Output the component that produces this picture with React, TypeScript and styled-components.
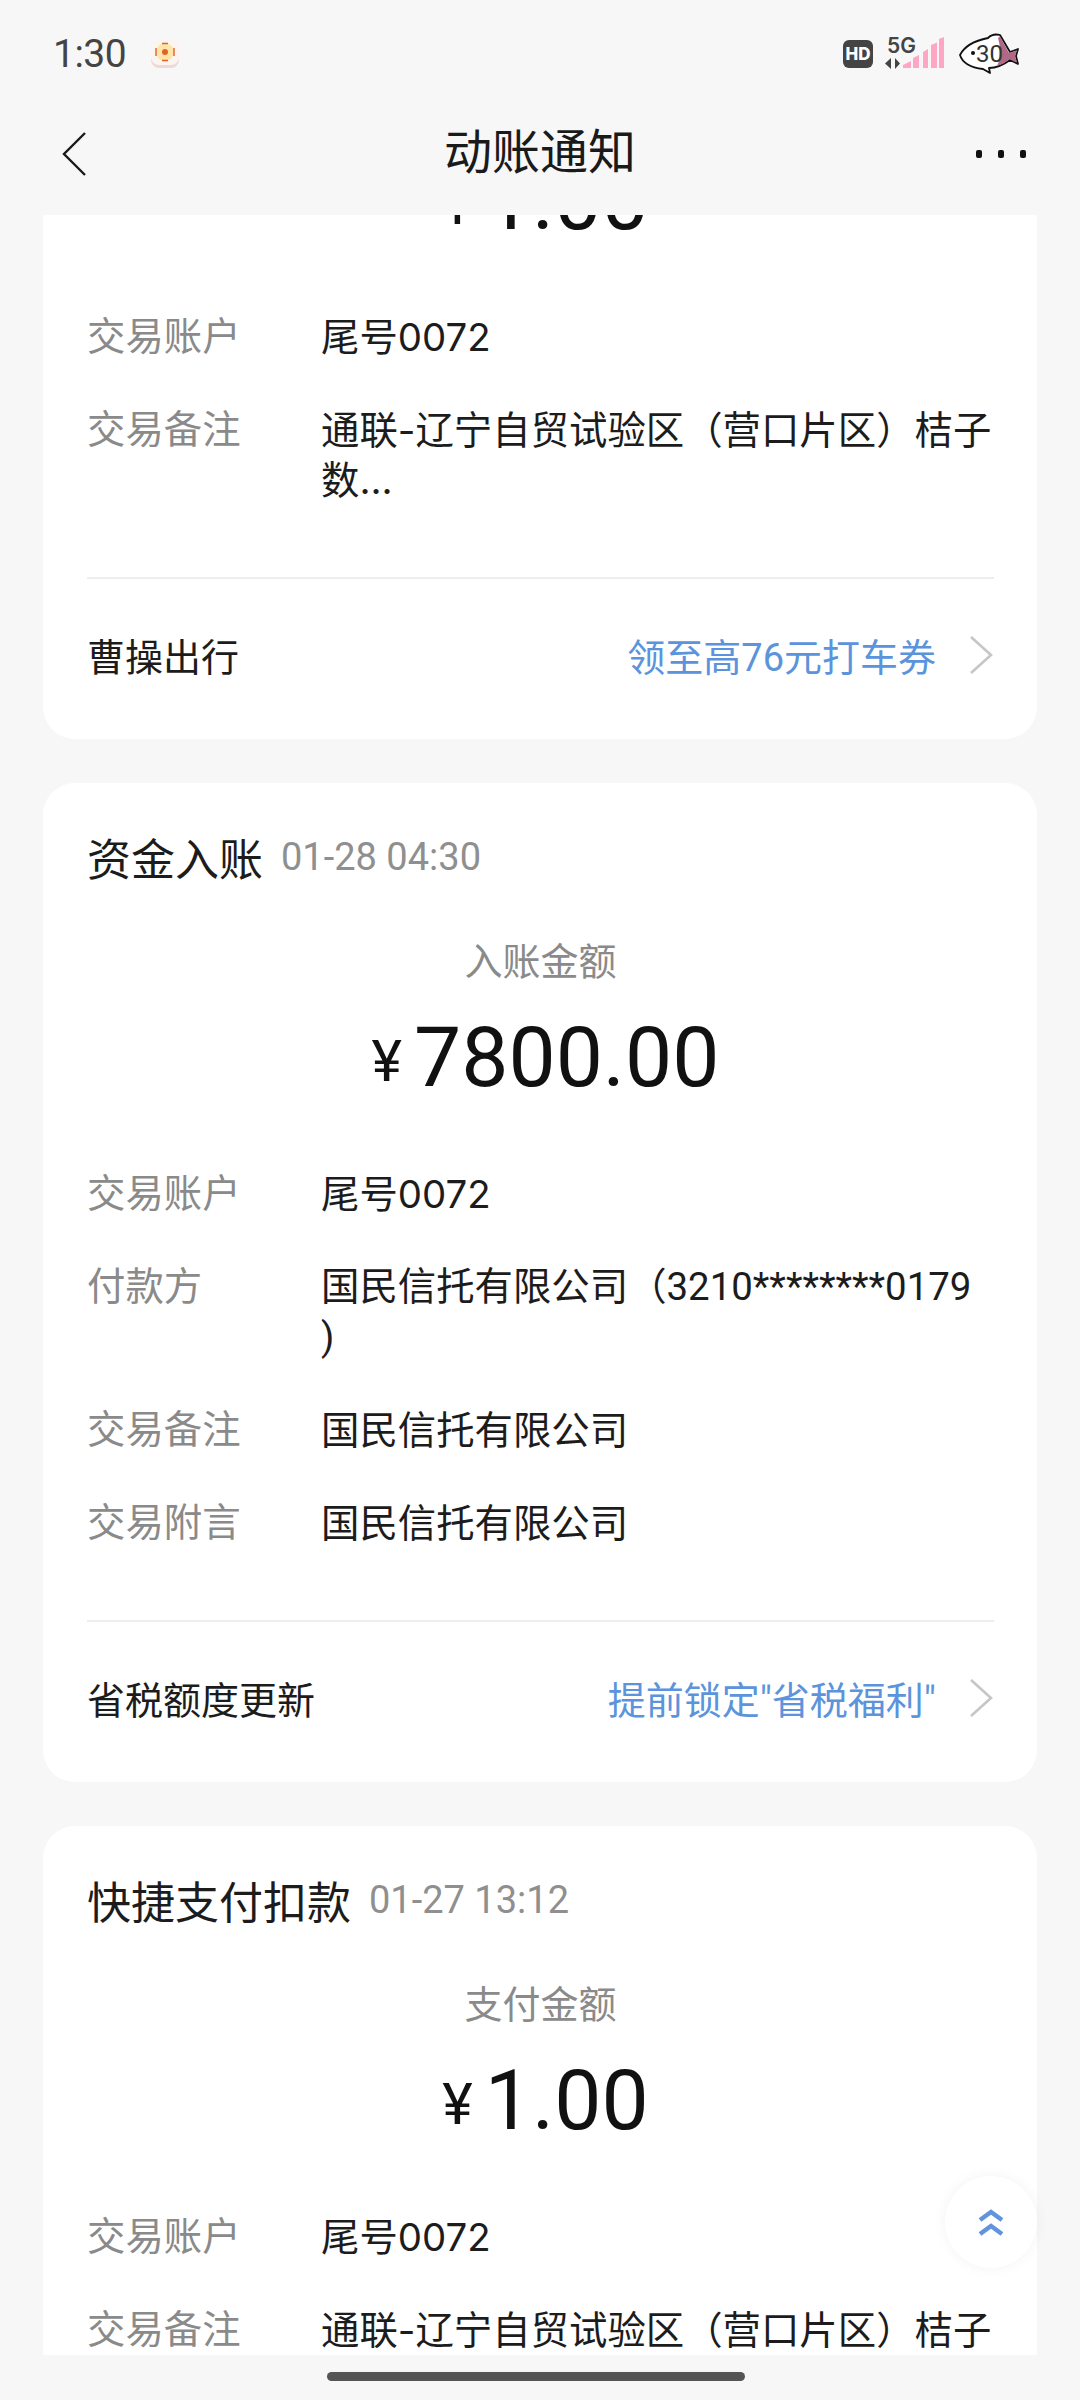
import styled, { createGlobalStyle } from "styled-components";

const GlobalStyle = createGlobalStyle`
  html, body {
    margin: 0;
    padding: 0;
    background: #f7f7f7;
  }
`;

const Page = styled.div`
  position: relative;
  width: 1080px;
  height: 2400px;
  overflow: hidden;
  display: flex;
  flex-direction: column;
  background: #f7f7f7;
  font-family: Roboto, "Noto Sans CJK SC", sans-serif;
`;

const StatusBar = styled.div`
  height: 108px;
  flex: none;
  box-sizing: border-box;
  padding: 0 56px 0 53px;
  display: flex;
  align-items: center;
  color: #444;
`;

const Time = styled.span`
  font-size: 39px;
  line-height: 1;
  font-weight: 400;
  letter-spacing: -0.5px;
`;

const NotifyIcon = styled.svg`
  width: 30px;
  height: 30px;
  margin-left: 24px;
`;

const Spacer = styled.div`
  flex: 1;
`;

const StatusIcons = styled.svg`
  width: 184px;
  height: 48px;
`;

const Header = styled.div`
  height: 107px;
  flex: none;
  box-sizing: border-box;
  position: relative;
  display: flex;
  align-items: center;
  justify-content: space-between;
  padding: 0 54px 16px 62px;
`;

const Title = styled.h1`
  margin: 0;
  position: absolute;
  left: 0;
  right: 0;
  top: 15px;
  text-align: center;
  font-size: 48px;
  line-height: 60px;
  font-weight: 400;
  color: #1a1a1a;
`;

const BackIcon = styled.svg`
  width: 24px;
  height: 46px;
`;

const MoreIcon = styled.svg`
  width: 50px;
  height: 10px;
`;

const Scroll = styled.div`
  flex: 1;
  overflow: hidden;
  padding: 0 43px;
`;

const CardList = styled.div`
  margin-top: -289px;
  display: flex;
  flex-direction: column;
  gap: 44px;
`;

const Card = styled.section`
  background: #fff;
  border-radius: 32px;
  padding: 44px 43px 0 44px;
`;

const CardHead = styled.div`
  height: 60px;
  display: flex;
  align-items: center;
  gap: 18px;
`;

const CardTitle = styled.span`
  font-size: 44px;
  color: #1c1c1c;
`;

const CardDate = styled.span`
  font-size: 38px;
  color: #8f8f8f;
`;

const AmountLabel = styled.div`
  margin-top: 50px;
  text-align: center;
  font-size: 38px;
  line-height: 50px;
  color: #8a8a8a;
`;

const Amount = styled.div`
  margin-top: 21px;
  height: 100px;
  display: flex;
  align-items: center;
  justify-content: center;
  gap: 12px;
  padding-left: 10px;
  color: #111;
`;

const Currency = styled.span`
  font-size: 58px;
  line-height: 1;
  margin-top: 6px;
`;

const AmountValue = styled.span`
  font-size: 84px;
  line-height: 1;
  font-weight: 400;
`;

const Rows = styled.div`
  margin-top: 61px;
  display: flex;
  flex-direction: column;
  gap: 43px;
`;

const Row = styled.div`
  display: flex;
  font-size: 38.4px;
  line-height: 50px;
`;

const RowLabel = styled.span`
  width: 234px;
  flex: none;
  color: #8a8a8a;
`;

// masked account numbers run narrower than the rest of the values
const RowValue = styled.span<{ $masked: boolean }>`
  flex: 1;
  color: #1c1c1c;
  white-space: pre-line;
  font-family: ${(p) => (p.$masked ? "Roboto" : "Inter")}, "Noto Sans CJK SC", sans-serif;
`;

const Footer = styled.div`
  margin-top: 72px;
  height: 162px;
  box-sizing: border-box;
  padding-bottom: 9px;
  border-top: 2px solid #eeeeee;
  display: flex;
  align-items: center;
  justify-content: space-between;
  font-size: 38px;
`;

const FooterName = styled.span`
  color: #1c1c1c;
`;

const FooterLink = styled.span`
  display: flex;
  align-items: center;
  gap: 32px;
  color: #5b93dc;
`;

const ChevronIcon = styled.svg`
  width: 26px;
  height: 40px;
`;

const TopButton = styled.button`
  position: absolute;
  left: 945px;
  top: 2176px;
  width: 92px;
  height: 92px;
  padding: 0;
  border: none;
  border-radius: 50%;
  background: #fff;
  box-shadow: 0 0 14px rgba(0, 0, 0, 0.05);
  display: flex;
  align-items: center;
  justify-content: center;
`;

const BottomBar = styled.div`
  height: 45px;
  flex: none;
  display: flex;
  justify-content: center;
  padding: 17px 8px 0 0;
  box-sizing: border-box;
`;

const HomePill = styled.div`
  width: 418px;
  height: 9px;
  border-radius: 5px;
  background: #555;
`;

type CardData = {
  title: string;
  date: string;
  amountLabel: string;
  amount: string;
  rows: [string, string][];
  footerName: string;
  footerLink: string;
};

const TRANSFER_NOTE = "通联-辽宁自贸试验区（营口片区）桔子\n数...";

const cards: CardData[] = [
  {
    title: "快捷支付扣款",
    date: "01-27 13:12",
    amountLabel: "支付金额",
    amount: "1.00",
    rows: [
      ["交易账户", "尾号0072"],
      ["交易备注", TRANSFER_NOTE],
    ],
    footerName: "曹操出行",
    footerLink: "领至高76元打车券",
  },
  {
    title: "资金入账",
    date: "01-28 04:30",
    amountLabel: "入账金额",
    amount: "7800.00",
    rows: [
      ["交易账户", "尾号0072"],
      ["付款方", "国民信托有限公司（3210********0179\n)"],
      ["交易备注", "国民信托有限公司"],
      ["交易附言", "国民信托有限公司"],
    ],
    footerName: "省税额度更新",
    footerLink: '提前锁定"省税福利"',
  },
  {
    title: "快捷支付扣款",
    date: "01-27 13:12",
    amountLabel: "支付金额",
    amount: "1.00",
    rows: [
      ["交易账户", "尾号0072"],
      ["交易备注", TRANSFER_NOTE],
    ],
    footerName: "曹操出行",
    footerLink: "领至高76元打车券",
  },
];

function NoticeCard({ card }: { card: CardData }) {
  return (
    <Card>
      <CardHead>
        <CardTitle>{card.title}</CardTitle>
        <CardDate>{card.date}</CardDate>
      </CardHead>
      <AmountLabel>{card.amountLabel}</AmountLabel>
      <Amount>
        <Currency>¥</Currency>
        <AmountValue>{card.amount}</AmountValue>
      </Amount>
      <Rows>
        {card.rows.map(([label, value]) => (
          <Row key={label}>
            <RowLabel>{label}</RowLabel>
            <RowValue $masked={value.includes("*")}>{value}</RowValue>
          </Row>
        ))}
      </Rows>
      <Footer>
        <FooterName>{card.footerName}</FooterName>
        <FooterLink>
          {card.footerLink}
          <ChevronIcon viewBox="0 0 26 40" fill="none" stroke="#c6c6c6" strokeWidth="2.6">
            <path d="M3 2 L23 20 L3 38" />
          </ChevronIcon>
        </FooterLink>
      </Footer>
    </Card>
  );
}

function App() {
  return (
    <Page>
      <GlobalStyle />
      <StatusBar>
        <Time>1:30</Time>
        <NotifyIcon viewBox="0 0 30 30">
          <rect x="1" y="1" width="28" height="28" rx="8" fill="#eed9d6" />
          <rect x="1" y="0" width="28" height="26" rx="8" fill="#fbf4f0" />
          <circle cx="15" cy="13" r="9" fill="#fde6a8" />
          <circle cx="15" cy="13" r="3" fill="#e2622a" />
          <path d="M6 9v8M24 9v8M12 4.5h6M12 21.5h6" stroke="#e2622a" strokeWidth="1.4" fill="none" />
        </NotifyIcon>
        <Spacer />
        <StatusIcons viewBox="0 0 184 48">
          <rect x="3" y="10" width="30" height="28" rx="6" fill="#444" />
          <text x="18" y="30" textAnchor="middle" fontFamily="Inter, sans-serif" fontSize="17" fontWeight="800" fill="#fff">HD</text>
          <text x="47" y="22.5" fontFamily="Inter, sans-serif" fontSize="21" fontWeight="600" fill="#444">5G</text>
          <path d="M51 28v11l-6-5.5zM55 28v11l5-5.5z" fill="#444" />
          <path d="M63 38v-3l8-4v7zM73 38V28l6-3v13zM83 38V22l5-3v19zM91 38V15l6-2.5V38zM99 38V9l5-2v31z" fill="#ffa6c4" />
          <path
            d="M120 25C125 15 138 10 148 8C151 5 156 4 160 5L170 22L178 19L176 26L178 34L170 30C162 36 154 38 149 38L150 43L143 39C130 38 122 32 120 25Z"
            fill="#fff"
            stroke="#111"
            strokeWidth="1.8"
            strokeLinejoin="round"
          />
          <path d="M158 8L160 6.5L169 23L177 20.5L175 26L177 32.5L169.5 29C165 33 160 35 157 36C161 29 161 18 158 8Z" fill="#b06884" />
          <circle cx="133" cy="23" r="2" fill="#111" />
          <text x="136" y="32" fontFamily="Roboto, sans-serif" fontSize="24" fill="#333">30</text>
        </StatusIcons>
      </StatusBar>
      <Header>
        <BackIcon viewBox="0 0 24 46" fill="none" stroke="#1a1a1a" strokeWidth="2.4">
          <path d="M23 2 L2 23 L23 44" />
        </BackIcon>
        <Title>动账通知</Title>
        <MoreIcon viewBox="0 0 50 10" fill="#111">
          <rect x="0" y="1" width="6" height="8" rx="2" />
          <rect x="22" y="1" width="6" height="8" rx="2" />
          <rect x="44" y="1" width="6" height="8" rx="2" />
        </MoreIcon>
      </Header>
      <Scroll>
        <CardList>
          {cards.map((card, i) => (
            <NoticeCard key={i} card={card} />
          ))}
        </CardList>
      </Scroll>
      <BottomBar>
        <HomePill />
      </BottomBar>
      <TopButton aria-label="top">
        <svg width="28" height="30" viewBox="0 0 28 30" fill="none" stroke="#6094dd" strokeWidth="4.5">
          <path d="M3 13 L14 5 L25 13" />
          <path d="M3 27 L14 19 L25 27" />
        </svg>
      </TopButton>
    </Page>
  );
}

export default App;
